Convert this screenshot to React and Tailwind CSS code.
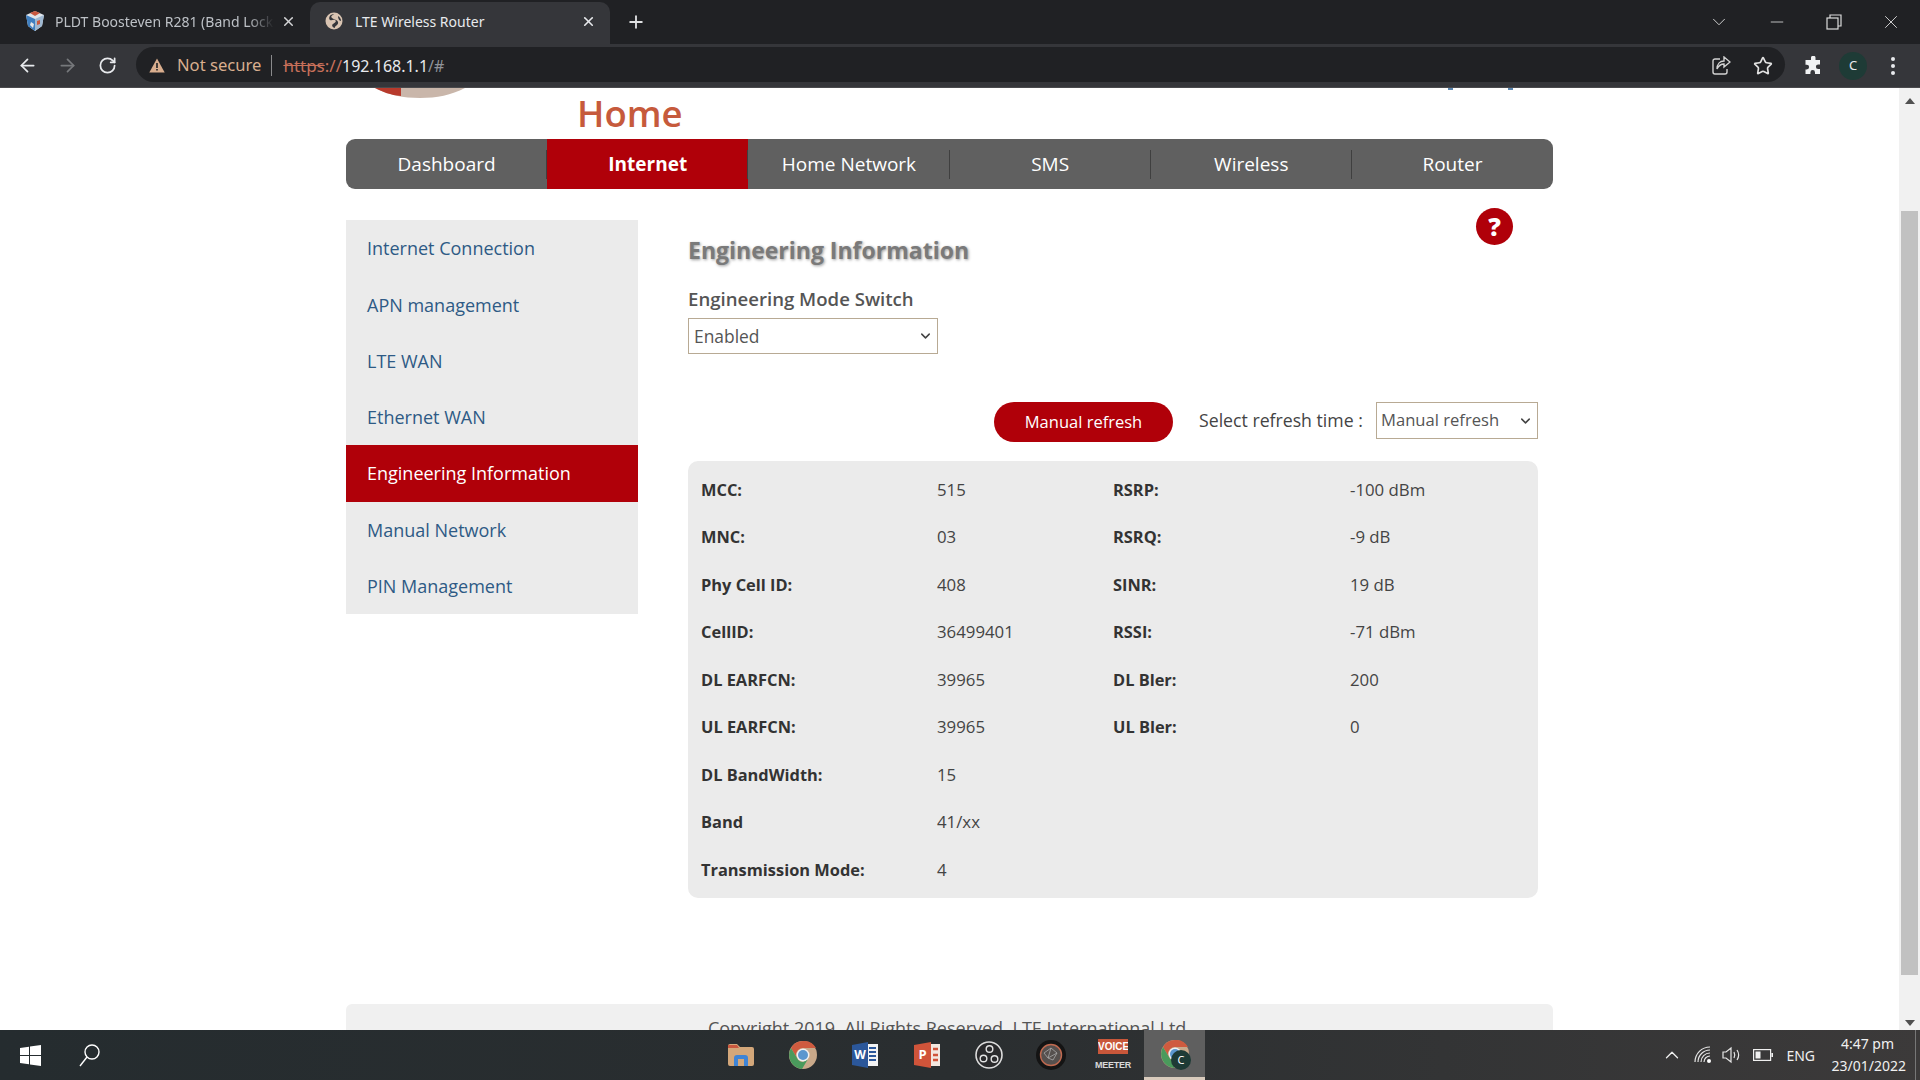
import React from "react";
import { ArrowLeft, ArrowRight, RotateCw, Star, Plus, X, ChevronDown, Minus, ChevronUp } from "lucide-react";

const nav = ["Dashboard", "Internet", "Home Network", "SMS", "Wireless", "Router"];
const side = ["Internet Connection", "APN management", "LTE WAN", "Ethernet WAN", "Engineering Information", "Manual Network", "PIN Management"];
const rows = [
  ["MCC:", "515", "RSRP:", "-100 dBm"],
  ["MNC:", "03", "RSRQ:", "-9 dB"],
  ["Phy Cell ID:", "408", "SINR:", "19 dB"],
  ["CellID:", "36499401", "RSSI:", "-71 dBm"],
  ["DL EARFCN:", "39965", "DL Bler:", "200"],
  ["UL EARFCN:", "39965", "UL Bler:", "0"],
  ["DL BandWidth:", "15", "", ""],
  ["Band", "41/xx", "", ""],
  ["Transmission Mode:", "4", "", ""],
];

function Cube() {
  return (
    <svg width="22" height="22" viewBox="0 0 22 22" className="shrink-0">
      <path d="M11 1 20 5 18 16 11 21 4 16 2 5Z" fill="#dfe5ea" />
      <path d="M2 5 11 9 11 21 4 16Z" fill="#3f7fc0" />
      <path d="M20 5 11 9 11 21 18 16Z" fill="#9fb9d2" />
      <path d="M6 3 11 1 16 3 11 6Z" fill="#c9583f" />
      <path d="M7 12 10 14 9 18 6 15Z" fill="#e6e6e6" />
      <path d="M13 11 16 10 16 14 13 15Z" fill="#c9583f" />
    </svg>
  );
}

function Globe() {
  return (
    <svg width="18" height="18" viewBox="0 0 18 18" className="shrink-0">
      <circle cx="9" cy="9" r="8.5" fill="#d9c4b2" />
      <path d="M9 2C5 2 3 6 5 8c2 1 3-1 5 0s0 3-2 4 0 4 2 4c-1-2 4-3 3-6S9 8 7 6s1-3 2-4Z" fill="#35363a" />
      <path d="M13 4c2 1 3 3 3 5-2 0-3-3-3-5Z" fill="#35363a" />
    </svg>
  );
}

function Tile({ children }) {
  return <div className="w-[62px] h-full flex items-center justify-center">{children}</div>;
}

function Folder() {
  return (
    <svg width="28" height="24" viewBox="0 0 28 24">
      <path d="M1 3a2 2 0 0 1 2-2h7l3 3h12a2 2 0 0 1 2 2v15a2 2 0 0 1-2 2H3a2 2 0 0 1-2-2Z" fill="#d3a77a" />
      <path d="M1 2h9l2 3H1Z" fill="#c9583f" />
      <path d="M7 23v-8a3 3 0 0 1 3-3h8a3 3 0 0 1 3 3v8h-4v-7h-6v7Z" fill="#3e84d6" />
    </svg>
  );
}

function ChromeIcon({ size = 28 }) {
  return (
    <svg width={size} height={size} viewBox="0 0 28 28">
      <circle cx="14" cy="14" r="14" fill="#c9a98a" />
      <path d="M14 0A14 14 0 0 0 2 7l6 10-1-3a7 7 0 0 1 7-7h13A14 14 0 0 0 14 0Z" fill="#cf5b3f" />
      <path d="M2 7a14 14 0 0 0 11 21l6-10-5 3a7 7 0 0 1-6-4Z" fill="#4a9a5c" />
      <circle cx="14" cy="14" r="6.5" fill="#f0f0f0" />
      <circle cx="14" cy="14" r="5" fill="#5b97cf" />
    </svg>
  );
}

function Word() {
  return (
    <svg width="28" height="28" viewBox="0 0 28 28">
      <path d="M8 3h19v22H8Z" fill="#f3f3f3" />
      <path d="M18 7h7M18 11h7M18 15h7M18 19h7" stroke="#2b579a" strokeWidth="2" />
      <path d="M1 4 17 1v26L1 24Z" fill="#2b579a" />
      <text x="9" y="18" fontSize="12" fontWeight="700" textAnchor="middle" fill="#fff" fontFamily="Open Sans, sans-serif">W</text>
    </svg>
  );
}

function Ppt() {
  return (
    <svg width="28" height="28" viewBox="0 0 28 28">
      <path d="M10 3h17v22H10Z" fill="#f3e7df" />
      <path d="M20 8h5M20 14h5M20 19h5" stroke="#d0543a" strokeWidth="2.4" />
      <path d="M1 4 18 1v26L1 24Z" fill="#d0543a" />
      <text x="9.5" y="18" fontSize="13" fontWeight="700" textAnchor="middle" fill="#fff" fontFamily="Open Sans, sans-serif">P</text>
    </svg>
  );
}

function Obs() {
  return (
    <svg width="28" height="28" viewBox="0 0 28 28" fill="none">
      <circle cx="14" cy="14" r="13" fill="#2a2a2c" stroke="#dcdcdc" strokeWidth="1.6" />
      <circle cx="14.5" cy="8" r="4" fill="#e4e4e4" />
      <circle cx="8.5" cy="17.5" r="4" fill="#e4e4e4" />
      <circle cx="19.5" cy="18" r="4" fill="#e4e4e4" />
      <circle cx="14.5" cy="8" r="2.6" fill="#2a2a2c" />
      <circle cx="8.5" cy="17.5" r="2.6" fill="#2a2a2c" />
      <circle cx="19.5" cy="18" r="2.6" fill="#2a2a2c" />
    </svg>
  );
}

function DarkDisc() {
  return (
    <svg width="30" height="30" viewBox="0 0 30 30">
      <circle cx="15" cy="15" r="15" fill="#141414" />
      <circle cx="15" cy="15" r="10.5" fill="#56504e" stroke="#c06a50" strokeWidth="1.4" />
      <path d="M8 13 15 8l6 5-4 7-5-2ZM15 8l-3 10M21 13l-9 5" stroke="#a8a8a8" strokeWidth=".8" fill="none" />
    </svg>
  );
}

function Voice() {
  return (
    <div className="flex flex-col items-center w-[32px]">
      <div className="bg-[#c9573a] text-[#fff] text-[10px] font-bold leading-[15px] w-[30px] text-center [font-family:'Liberation_Sans',sans-serif] h-[15px] overflow-hidden">VOICE</div>
      <div className="text-[#d9d9d9] text-[9px] font-bold leading-[12px] mt-[5px] tracking-tight [font-family:'Liberation_Sans',sans-serif]">MEETER</div>
    </div>
  );
}

function Dropdown({ box, field, children }) {
  return (
    <div className={`relative shrink-0 ${box}`}>
      <select className={`block appearance-none w-full h-full bg-white border border-[#b8aa94] text-[#555] [font-family:'Open_Sans',sans-serif] ${field}`}>
        {children}
      </select>
      <ChevronDown size={15} strokeWidth={2.4} className="absolute right-[5px] top-1/2 -translate-y-1/2 text-[#444] pointer-events-none" />
    </div>
  );
}

export default function App() {
  return (
    <div className="w-[1920px] h-[1080px] overflow-hidden flex flex-col bg-white [font-family:'Open_Sans',sans-serif]">
      {/* tab strip */}
      <div className="h-[44px] shrink-0 bg-[#202124] flex items-end text-[14px] [font-family:'Noto_Sans',sans-serif]">
        <div className="w-[310px] h-[44px] flex items-center pl-[24px] pr-[14px] pb-[2px]">
          <Cube />
          <div className="ml-[9px] w-[219px] overflow-hidden whitespace-nowrap text-[#bdc1c6] [mask-image:linear-gradient(to_right,black_88%,transparent)]">PLDT Boosteven R281 (Band Lock</div>
          <X size={15} strokeWidth={2.4} className="ml-[7px] text-[#d5d6d8]" />
        </div>
        <div className="w-[300px] h-[42px] bg-[#35363a] rounded-t-[10px] flex items-center pl-[15px] pr-[14px] pb-[4px]">
          <Globe />
          <div className="ml-[12px] flex-1 text-[#e8eaed] whitespace-nowrap">LTE Wireless Router</div>
          <X size={15} strokeWidth={2.6} className="text-[#e8eaed]" />
        </div>
        <div className="h-[44px] flex items-center ml-[16px]">
          <Plus size={20} strokeWidth={2.2} className="text-[#e0e1e3]" />
        </div>
        <div className="ml-auto h-[44px] flex items-center text-[#dcdcdc]">
          <ChevronDown size={22} strokeWidth={1} className="mr-[37px]" />
          <Minus size={20} strokeWidth={1} className="mr-[39px]" />
          <svg width="16" height="16" viewBox="0 0 16 16" fill="none" stroke="currentColor" strokeWidth="1.2" className="mr-[38px]">
            <rect x="1" y="4" width="11" height="11" />
            <path d="M4 4V1h11v11h-3" />
          </svg>
          <X size={22} strokeWidth={1} className="mr-[18px]" />
        </div>
      </div>

      {/* toolbar */}
      <div className="h-[44px] shrink-0 bg-[#35363a] border-b border-b-[#4a4a4d] flex items-center">
        <ArrowLeft size={21} strokeWidth={2} className="ml-[17px] text-[#e8eaed]" />
        <ArrowRight size={21} strokeWidth={2} className="ml-[19px] text-[#76787b]" />
        <RotateCw size={19} strokeWidth={2.2} className="ml-[20px] text-[#e8eaed]" />
        <div className="ml-[19px] w-[1649px] h-[35px] pt-[2px] rounded-full bg-[#202124] flex items-center text-[18px] [font-family:'Noto_Sans',sans-serif] -mt-[2px]">
          <svg width="16" height="15" viewBox="0 0 16 15" className="ml-[13px]">
            <path d="M8 .5 15.7 14.5H.3Z" fill="#d9ae8e" />
            <path d="M7.2 5h1.6v5H7.2ZM7.2 11h1.6v1.6H7.2Z" fill="#202124" />
          </svg>
          <span className="ml-[12px] text-[#d9ae8e] text-[16.6px]">Not secure</span>
          <span className="ml-[10px] w-px h-[21px] bg-[#8a8a8c]" />
          <span className="ml-[11px] text-[#c8705a] line-through text-[17px]">https</span>
          <span className="text-[#c8705a] text-[17px]">://</span>
          <span className="text-[#e8eaed] text-[16px]">192.168.1.1</span>
          <span className="text-[#8f9399] text-[16px]">/#</span>
          <div className="ml-auto flex items-center">
            <svg width="19" height="19" viewBox="0 0 19 19" fill="none" stroke="#d2d2d2" strokeWidth="1.4" className="mr-[22px]">
              <path d="M8 3H3a2 2 0 0 0-2 2v11a2 2 0 0 0 2 2h10a2 2 0 0 0 2-2v-3" />
              <path d="M12 1l6 5-6 5V8c-3 0-5 1-7 5 0-5 3-8 7-8Z" />
            </svg>
            <Star size={20} strokeWidth={2} className="text-[#e1e1e1] mr-[12px]" />
          </div>
        </div>
        <svg width="20" height="20" viewBox="0 0 20 20" className="ml-[18px]">
          <path d="M8 1.5a2.3 2.3 0 0 1 4.5 0V4H17v4.5h-1.8a2.3 2.3 0 0 0 0 4.6H17V18h-5v-1.6a2.3 2.3 0 0 0-4.6 0V18H2.5v-4.5h1.2a2.4 2.4 0 0 0 0-4.8H2.5V4H8Z" fill="#f1f3f4" />
        </svg>
        <div className="ml-[16px] w-[28px] h-[28px] rounded-full bg-[#1e3b36] flex items-center justify-center text-[13px] text-[#e8eaed] [font-family:'Noto_Sans',sans-serif]">C</div>
        <div className="ml-[24px] flex flex-col gap-[3px]">
          <span className="w-[4px] h-[4px] rounded-full bg-[#e8eaed]" />
          <span className="w-[4px] h-[4px] rounded-full bg-[#e8eaed]" />
          <span className="w-[4px] h-[4px] rounded-full bg-[#e8eaed]" />
        </div>
      </div>

      {/* page */}
      <div className="flex-1 min-h-0 flex">
        <div className="flex-1 min-w-0 overflow-hidden pl-[346px]">
          <div className="w-[1207px]">
            <div className="h-[51px] flex items-start relative">
              <svg width="90" height="10" viewBox="0 0 90 10" className="ml-[29px] shrink-0">
                <path d="M0 0h90C76 7 62 10 45 10S14 7 0 0Z" fill="#c9b6aa" />
                <path d="M0 0h26v8C15 7 8 4 0 0Z" fill="#b83a2c" />
              </svg>
              <div className="ml-[112px] mt-[3px] text-[36.5px] leading-[44px] font-semibold text-[#c65a3c]">Home</div>
              <div className="ml-auto mr-[40px] flex gap-[55px]">
                <span className="w-[5px] h-[2px] bg-[#5b86b0]" />
                <span className="w-[5px] h-[2px] bg-[#5b86b0]" />
              </div>
            </div>

            <div className="h-[50px] rounded-[9px] bg-[#606060] flex overflow-hidden text-[19px] text-white font-medium">
              {nav.map((n, i) => (
                <div key={n} className={`relative flex-1 flex items-center justify-center ${i === 1 ? "bg-[#b00009] font-bold" : ""}`}>
                  {n}
                  {i < 5 && <span className="absolute right-0 top-[11px] h-[29px] w-px bg-[#3f3f3f]" />}
                </div>
              ))}
            </div>

            <div className="mt-[31px] flex">
              <div className="w-[292px] shrink-0 self-start bg-[#ebebeb] flex flex-col">
                {side.map((s, i) => (
                  <div key={s} className={`flex items-center pl-[21px] text-[18px] ${i === 0 || i === 4 ? "h-[57px]" : "h-[56px]"} ${i === 4 ? "bg-[#b00009] text-white" : "text-[#2e5a85]"}`}>
                    {s}
                  </div>
                ))}
              </div>

              <div className="ml-[50px] w-[850px] relative">
                <div className="absolute right-[25px] -top-[12px] w-[37px] h-[37px] rounded-full bg-[#b00009] flex items-center justify-center text-white text-[25px] font-extrabold leading-none">?</div>
                <div className="h-[60px] flex items-center text-[23px] font-bold text-[#7a7a7a] [text-shadow:1px_1px_3px_#999]">Engineering Information</div>
                <div className="h-[38px] flex items-center text-[18.6px] font-semibold text-[#555]">Engineering Mode Switch</div>
                <Dropdown box="w-[250px] h-[36px]" field="text-[17.4px] pl-[5px]">
                  <option>Enabled</option>
                  <option>Disabled</option>
                </Dropdown>
                <div className="mt-[48px] h-[40px] flex justify-end">
                  <div className="w-[179px] h-[40px] rounded-full bg-[#b00009] text-white text-[16.5px] flex items-center justify-center">Manual refresh</div>
                  <div className="ml-[26px] mr-[13px] w-[164px] h-[37px] flex items-center text-[17.7px] text-[#444] whitespace-nowrap">Select refresh time :</div>
                  <Dropdown box="w-[162px] h-[37px]" field="text-[16.6px] pl-[4px]">
                    <option>Manual refresh</option>
                  </Dropdown>
                </div>
                <div className="mt-[19px] h-[437px] rounded-[10px] bg-[#ebebeb] pl-[13px] pt-[5px] grid grid-cols-[236px_176px_237px_1fr] auto-rows-[47.5px] items-center text-[16.8px] leading-[24px]">
                  {rows.map((r) => (
                    <React.Fragment key={r[0]}>
                      <div className="font-bold text-[16.4px] text-[#333]">{r[0]}</div>
                      <div className="text-[#444]">{r[1]}</div>
                      <div className="font-bold text-[16.4px] text-[#333]">{r[2]}</div>
                      <div className="text-[#444]">{r[3]}</div>
                    </React.Fragment>
                  ))}
                </div>
              </div>
            </div>

            <div className="mt-[106px] h-[60px] rounded-[6px] bg-[#f0f0f0] pt-[11px] text-center text-[18px] text-[#555]">Copyright 2019. All Rights Reserved. LTE International Ltd.</div>
          </div>
        </div>

        {/* scrollbar */}
        <div className="w-[21px] shrink-0 bg-[#f1f1f1] flex flex-col items-center">
          <svg width="12" height="8" viewBox="0 0 12 8" className="mt-[9px]"><path d="M6 1 11 7H1Z" fill="#505050" /></svg>
          <div className="mt-[106px] w-[17px] h-[764px] bg-[#c1c1c1]" />
          <svg width="12" height="8" viewBox="0 0 12 8" className="mt-[44px]"><path d="M6 7 11 1H1Z" fill="#505050" /></svg>
        </div>
      </div>

      {/* taskbar */}
      <div className="h-[50px] shrink-0 bg-gradient-to-r from-[#252c2f] via-[#2a2e30] to-[#3c3a3a] flex items-center [font-family:'Noto_Sans',sans-serif]">
        <svg width="21" height="21" viewBox="0 0 21 21" className="ml-[20px]">
          <path d="M0 3 9 1.8V10H0ZM10 1.6 21 0V10H10ZM0 11H9V19.2L0 18ZM10 11H21V21L10 19.4Z" fill="#fff" />
        </svg>
        <svg width="22" height="24" viewBox="0 0 22 24" fill="none" stroke="#fff" strokeWidth="1.4" className="ml-[37px]">
          <circle cx="14" cy="9" r="7" />
          <path d="M9 14 2 23" />
        </svg>
        <div className="ml-[610px] h-full flex">
          <Tile><Folder /></Tile>
          <Tile><ChromeIcon /></Tile>
          <Tile><Word /></Tile>
          <Tile><Ppt /></Tile>
          <Tile><Obs /></Tile>
          <Tile><DarkDisc /></Tile>
          <Tile><Voice /></Tile>
          <div className="w-[61px] h-full bg-[#5f5f5f] border-b-[3px] border-b-[#d9cbbd] flex items-center justify-center relative">
            <ChromeIcon />
            <span className="absolute right-[14px] bottom-[7px] w-[20px] h-[20px] rounded-full bg-[#1e3b36] text-[11px] text-white flex items-center justify-center">C</span>
          </div>
        </div>
        <div className="ml-auto flex items-center text-[#f0f0f0]">
          <ChevronUp size={22} strokeWidth={1.4} className="mr-[11px]" />
          <svg width="18" height="18" viewBox="0 0 18 18" fill="none" stroke="#e6e6e6" strokeWidth="1.2" className="mr-[10px]">
            <path d="M1 16A15 15 0 0 1 16 1M4 16A12 12 0 0 1 16 4M7 16A9 9 0 0 1 16 7M10 16a6 6 0 0 1 6-6" />
            <circle cx="15" cy="15" r="2" fill="#fff" stroke="none" />
          </svg>
          <svg width="20" height="18" viewBox="0 0 20 18" fill="none" stroke="#e6e6e6" strokeWidth="1.2" className="mr-[11px]">
            <path d="M1 6h3l5-4v14l-5-4H1ZM12 6c1 2 1 4 0 6M15 4c2 3 2 7 0 10" />
          </svg>
          <svg width="20" height="12" viewBox="0 0 20 12" className="mr-[13px]">
            <rect x=".6" y=".6" width="17" height="10.8" fill="none" stroke="#f0f0f0" strokeWidth="1.2" />
            <rect x="2.5" y="2.5" width="5" height="7" fill="#f0f0f0" />
            <rect x="18.4" y="4" width="1.6" height="4" fill="#f0f0f0" />
          </svg>
          <span className="text-[14px] mr-[15px]">ENG</span>
          <div className="w-[76px] text-right text-[14px] leading-[22px] mr-[9px]">
            <div className="pr-[12px]">4:47 pm</div>
            <div>23/01/2022</div>
          </div>
          <span className="w-px h-[50px] bg-[#777] mr-[4px]" />
        </div>
      </div>
    </div>
  );
}
